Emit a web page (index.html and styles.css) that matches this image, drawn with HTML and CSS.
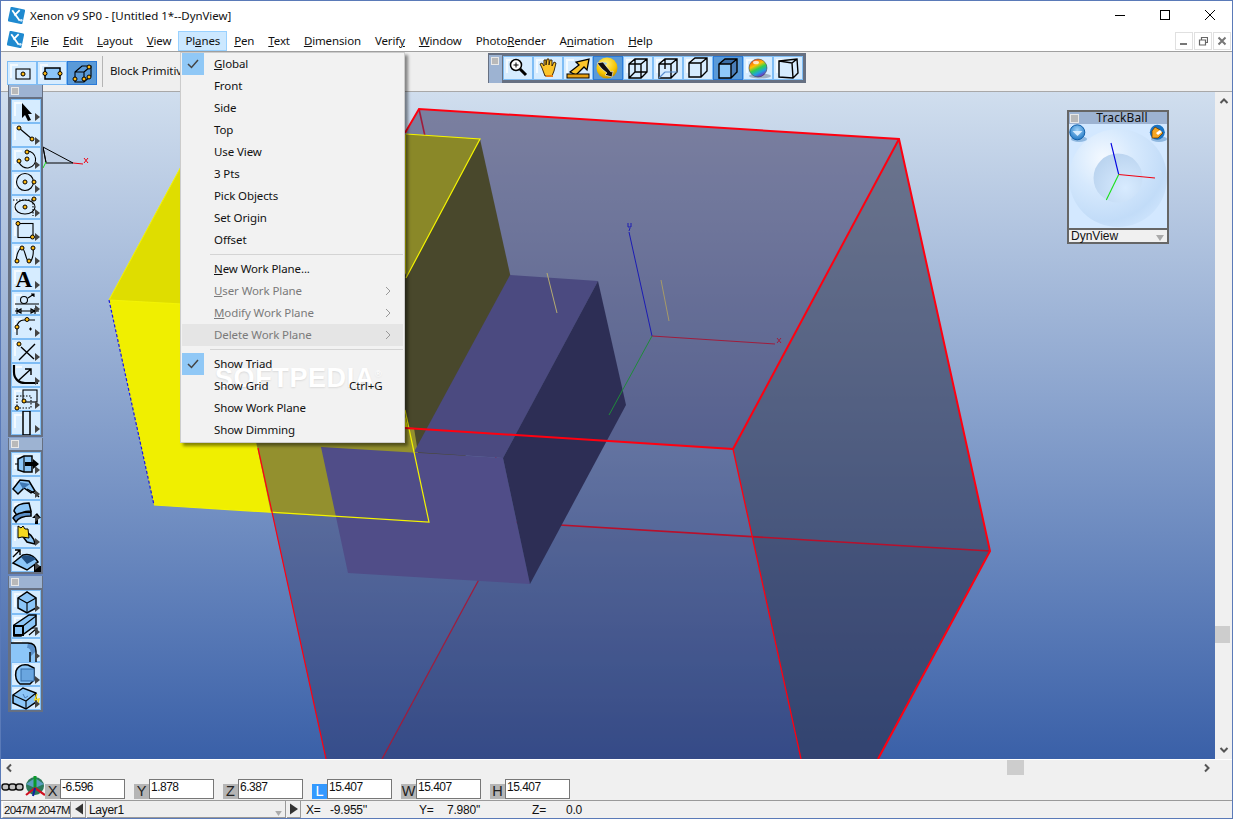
FILE: index.html
```html
<!DOCTYPE html>
<html lang="en">
<head>
<meta charset="utf-8">
<title>Xenon v9 SP0</title>
<link rel="stylesheet" href="styles.css">
</head>
<body>
<div class="app">
  <header class="titlebar">
    <svg class="logo" viewBox="0 0 16 16"><rect x="1" y="1" width="14" height="14" rx="1" transform="rotate(12 8 8)" fill="#1f8ad0"/><path d="M4 3l7 10M11 3L6 8" stroke="#fff" stroke-width="1.700" fill="none"/><circle cx="12.500" cy="12.500" r="1.300" fill="#cfe9fa"/></svg>
    <span class="title-text">Xenon v9 SP0 - [Untitled 1*--DynView]</span>
    <div class="winbtns">
      <span class="winbtn"><svg viewBox="0 0 10 10"><path d="M0 5.500h10" stroke="#000"/></svg></span>
      <span class="winbtn"><svg viewBox="0 0 10 10"><rect x=".5" y=".5" width="9" height="9" fill="none" stroke="#000"/></svg></span>
      <span class="winbtn"><svg viewBox="0 0 10 10"><path d="M0 0l10 10M10 0L0 10" stroke="#000"/></svg></span>
    </div>
  </header>

  <nav class="menubar">
    <svg class="logo menu-logo" viewBox="0 0 16 16"><rect x="1" y="1" width="14" height="14" rx="1" transform="rotate(12 8 8)" fill="#1f8ad0"/><path d="M4 3l7 10M11 3L6 8" stroke="#fff" stroke-width="1.700" fill="none"/><circle cx="12.500" cy="12.500" r="1.300" fill="#cfe9fa"/></svg>
    <span class="mb"><u>F</u>ile</span>
    <span class="mb"><u>E</u>dit</span>
    <span class="mb"><u>L</u>ayout</span>
    <span class="mb"><u>V</u>iew</span>
    <span class="mb mb-open">Pl<u>a</u>nes</span>
    <span class="mb"><u>P</u>en</span>
    <span class="mb"><u>T</u>ext</span>
    <span class="mb"><u>D</u>imension</span>
    <span class="mb">Verif<u>y</u></span>
    <span class="mb"><u>W</u>indow</span>
    <span class="mb">Photo<u>R</u>ender</span>
    <span class="mb">A<u>n</u>imation</span>
    <span class="mb"><u>H</u>elp</span>
    <div class="mdibtns">
      <span class="mdibtn"><svg viewBox="0 0 10 10"><path d="M1 8h7" stroke="#777" stroke-width="2"/></svg></span>
      <span class="mdibtn"><svg viewBox="0 0 10 10"><path d="M1.500 4h6v5h-6zM3.500 4V1.500h6v5H7.500" fill="none" stroke="#666" stroke-width="1.200"/></svg></span>
      <span class="mdibtn"><svg viewBox="0 0 10 10"><path d="M1.500 1.500l7 7M8.500 1.500l-7 7" stroke="#777" stroke-width="2"/></svg></span>
    </div>
  </nav>

  <section class="toolrow">
    <div class="tr-group">
      <span class="tb"><svg viewBox="0 0 30 24"><rect class="ln" x="9" y="8" width="14" height="10" fill="#7dbdf5"/><circle class="nd" cx="16" cy="13" r="2"/></svg></span>
      <span class="tb"><svg viewBox="0 0 30 24"><rect class="bl" x="8" y="7" width="15" height="11"/><circle class="nd" cx="8" cy="12.500" r="2"/><circle class="nd" cx="23" cy="12.500" r="2"/></svg></span>
      <span class="tb tb-on"><svg viewBox="0 0 30 24"><path class="ln" d="M8 11l7-6h9v10l-7 6H8zM8 11h9v10M17 11l7-6"/><circle class="nd" cx="8" cy="18" r="2"/><circle class="nd" cx="17" cy="18" r="2"/><circle class="nd" cx="22" cy="6" r="2"/><circle class="nd" cx="22" cy="16" r="2"/></svg></span>
    </div>
    <span class="tr-sep"></span>
    <span class="tr-label">Block Primitive</span>
  </section>

  <main class="workspace">
    <svg class="scene" viewBox="1 92 1214 667" width="1214" height="667">
      <!-- large translucent cube -->
      <polygon points="419,109 899,139 733,449 251,418" fill="#2f2d5a" fill-opacity=".52"/>
      <polygon points="251,418 733,449 801,759 326,759" fill="#2f2d5a" fill-opacity=".36"/>
      <polygon points="899,139 990,551 878,759 801,759 733,449" fill="#2f3350" fill-opacity=".6"/>
      <polygon points="510,522 990,551 878,759 382,759" fill="#2f2d5a" fill-opacity=".08"/>
      <line x1="419" y1="109" x2="510" y2="522" stroke="#a01c3c" stroke-width="1.600"/>
      <line x1="510" y1="522" x2="990" y2="551" stroke="#b8102c" stroke-width="1.600"/>
      <line x1="510" y1="522" x2="382" y2="759" stroke="#a01c3c" stroke-width="1.300"/>
      <!-- yellow box -->
      <polygon points="109,300 205,122 480,139 383,315" fill="#dfdd00"/>
      <polygon points="109,300 383,315 429,522 154,505" fill="#f0ef00"/>
      <polygon points="480,139 383,315 429,522 526,346" fill="#49482c"/>
      <polygon points="406,134 480,139 406,278" fill="#8a8828"/>
      <polygon points="251,418 414,428 429,522 271,513" fill="#93902e"/>
      <!-- purple box -->
      <polygon points="414,452 510,275 598,281 503,458" fill="#4b4a80"/>
      <polygon points="321,447 503,458 530,584 348,573" fill="#504d88"/>
      <polygon points="598,281 626,405 530,584 503,458" fill="#2d2e55"/>
      <!-- edges -->
      <polyline points="154,505 429,522 405,410" fill="none" stroke="#f4f400" stroke-width="1.200"/>
      <polyline points="406,278 480,139 406,134" fill="none" stroke="#f4f400" stroke-width="1.200"/>
      <line x1="109" y1="300" x2="383" y2="315" stroke="#f4f400" stroke-width="1.200"/>
      <line x1="109" y1="300" x2="205" y2="122" stroke="#f4f400" stroke-width="1"/>
      <line x1="109" y1="300" x2="154" y2="505" stroke="#1a1ae0" stroke-width="1.200" stroke-dasharray="3 2"/>
      <polyline points="258,448 326,759" fill="none" stroke="#ff0010" stroke-width="1.200"/>
      <polyline points="405,133 419,109 899,139 990,551 878,759" fill="none" stroke="#ff0010" stroke-width="2"/>
      <polyline points="899,139 733,449" fill="none" stroke="#ff0010" stroke-width="2"/>
      <line x1="733" y1="449" x2="801" y2="759" stroke="#ff0010" stroke-width="1.300"/>
      <line x1="405" y1="428" x2="733" y2="449" stroke="#ff0010" stroke-width="2"/>
      <!-- triad -->
      <line x1="652" y1="336" x2="629" y2="232" stroke="#1c1cb4" stroke-width="1"/>
      <line x1="652" y1="336" x2="775" y2="344" stroke="#a01c3c" stroke-width="1"/>
      <line x1="652" y1="336" x2="609" y2="415" stroke="#1f8a3a" stroke-width="1"/>
      <line x1="547" y1="273" x2="557" y2="313" stroke="#b5ac72" stroke-width="1"/>
      <line x1="661" y1="280" x2="669" y2="321" stroke="#a69a68" stroke-width="1"/>
      <path d="M628 223v4h3v-4M630 228l-1 3" fill="none" stroke="#1c1cb4"/>
      <path d="M777 338l4 5M781 338l-4 5" fill="none" stroke="#a01c3c"/>
      <!-- small corner triad -->
      <path d="M43 147l30 16H46zM43 147l3 15" fill="none" stroke="#000"/>
      <line x1="73" y1="163" x2="83" y2="164" stroke="#f00010"/>
      <line x1="46" y1="162" x2="43" y2="168" stroke="#19e019"/>
      <path d="M84 158l4 5M88 158l-4 5" fill="none" stroke="#f00010"/>
    </svg>
    <div class="vscroll">
      <svg class="chev" viewBox="0 0 10 8"><path d="M1.500 6L5 2.500 8.500 6" fill="none" stroke="#555" stroke-width="2"/></svg>
      <span class="vthumb"></span>
      <svg class="chev" viewBox="0 0 10 8"><path d="M1.500 2L5 5.500 8.500 2" fill="none" stroke="#555" stroke-width="2"/></svg>
    </div>
  </main>

  <div class="hscroll">
    <svg class="chev" viewBox="0 0 8 10"><path d="M6 1.500L2.500 5 6 8.500" fill="none" stroke="#555" stroke-width="2"/></svg>
    <span class="hthumb"></span>
    <svg class="chev" viewBox="0 0 8 10"><path d="M2 1.500L5.500 5 2 8.500" fill="none" stroke="#555" stroke-width="2"/></svg>
  </div>

  <div class="coords">
    <svg class="coord-icon" viewBox="0 0 44 24">
      <g fill="#c4c4c4" stroke="#111" stroke-width="1.400"><rect x="1" y="8" width="7" height="6" rx="2.500"/><rect x="8" y="8" width="7" height="6" rx="2.500"/><rect x="15" y="8" width="7" height="6" rx="2.500"/></g>
      <circle cx="34" cy="10" r="9" fill="#2b7a5a"/>
      <path d="M25 8l9-6 9 6-9 4z" fill="#5a9fc0"/>
      <path d="M34 0v12" stroke="#0b9a2a" stroke-width="3"/>
      <path d="M34 12L25 19M34 12l10 7" stroke="#d01020" stroke-width="2.200"/>
      <path d="M34 12l-2 8" stroke="#1020a0" stroke-width="2"/>
    </svg>
    <span class="cf"><span class="cl">X</span><span class="ci">-6.596</span></span>
    <span class="cf"><span class="cl">Y</span><span class="ci">1.878</span></span>
    <span class="cf"><span class="cl">Z</span><span class="ci">6.387</span></span>
    <span class="cf"><span class="cl cl-on">L</span><span class="ci">15.407</span></span>
    <span class="cf"><span class="cl">W</span><span class="ci">15.407</span></span>
    <span class="cf"><span class="cl">H</span><span class="ci">15.407</span></span>
  </div>

  <footer class="status">
    <span class="st-mem">2047M 2047M</span>
    <span class="st-arrow"><svg viewBox="0 0 10 12"><path d="M1 6l8-5.500v11z" fill="#333"/></svg></span>
    <span class="st-layer">Layer1<svg class="st-drop" viewBox="0 0 8 6"><path d="M0 0h8L4 6z" fill="#aaa"/></svg></span>
    <span class="st-arrow"><svg viewBox="0 0 10 12"><path d="M9 6L1 .5v11z" fill="#333"/></svg></span>
    <span class="st-pos st-x">X=</span><span class="st-pos st-xv">-9.955''</span>
    <span class="st-pos st-y">Y=</span><span class="st-pos st-yv">7.980''</span>
    <span class="st-pos st-z">Z=</span><span class="st-pos st-zv">0.0</span>
  </footer>

  <!-- floating view toolbar -->
  <div class="float viewbar">
    <span class="grip grip-v"><i></i></span>
    <span class="tb"><svg viewBox="0 0 30 24"><circle cx="13" cy="9" r="5.500" fill="#fff" stroke="#000" stroke-width="1.500"/><path d="M13 6.500v5M10.500 9h5" stroke="#000"/><path d="M17 13l6 6" stroke="#000" stroke-width="3"/></svg></span>
    <span class="tb"><svg viewBox="0 0 30 24"><path d="M9 12l-2-4 2-1 2 3V4h2v5l1-6h2v6l1-5h2v6l2-4 2 1-2 8-2 5H12z" fill="#fbc42a" stroke="#2a1a00" stroke-width=".9"/><path d="M13 20h7" stroke="#e8801a" stroke-width="2"/></svg></span>
    <span class="tb"><svg viewBox="0 0 30 24"><path d="M7 16l9-7-3-3 13-3-2 11-3-3-8 8z" fill="#fbc42a" stroke="#000" stroke-width="1.300"/><rect x="4" y="18" width="22" height="4" fill="#e8a010" stroke="#000"/></svg></span>
    <span class="tb tb-on"><svg viewBox="0 0 30 24"><defs><radialGradient id="gold" cx=".45" cy=".3" r=".8"><stop offset="0" stop-color="#fff27a"/><stop offset=".6" stop-color="#f5c400"/><stop offset="1" stop-color="#a87800"/></radialGradient></defs><circle cx="14" cy="12" r="10.500" fill="url(#gold)"/><path d="M4 7l6-1 3 4 5 6 2-1-1 6-7-2 2-2-5-4z" fill="#111" stroke="#fff" stroke-width=".6"/><path d="M10 6l4 1-1 2z" fill="#8fc8fa"/></svg></span>
    <span class="tb"><svg viewBox="0 0 30 24"><path class="ln ln-b" d="M6 8l6-5h12v13l-6 6H6zM6 8h12v14M18 8l6-5M12 3v13h12M12 16l-6 6"/></svg></span>
    <span class="tb"><svg viewBox="0 0 30 24"><path class="ln ln-b" d="M6 8l6-5h12v13l-6 6H6zM6 8h12v14M18 8l6-5M12 3v10"/><path d="M12 16l-6 6M12 16h12" stroke="#5a8fd0" stroke-width="1.200"/></svg></span>
    <span class="tb"><svg viewBox="0 0 30 24"><path class="ln ln-b" d="M6 7l6-5h12v13l-6 6H6zM6 7h12v14M18 7l6-5"/></svg></span>
    <span class="tb tb-on"><svg viewBox="0 0 30 24"><path d="M6 8l6-5h12l-6 5z" fill="#3b6ea8"/><path d="M18 8l6-5v13l-6 6z" fill="#4a7db8"/><path d="M6 8h12v14H6z" fill="#8fc8fa"/><path class="ln ln-b" d="M6 8l6-5h12v13l-6 6H6zM6 8h12v14M18 8l6-5"/></svg></span>
    <span class="tb"><svg viewBox="0 0 30 24"><defs><linearGradient id="rb" x1=".2" y1="0" x2=".7" y2="1"><stop offset="0" stop-color="#ff3a1a"/><stop offset=".35" stop-color="#ffc000"/><stop offset=".55" stop-color="#30d050"/><stop offset=".75" stop-color="#20a0e0"/><stop offset="1" stop-color="#8020c0"/></linearGradient></defs><ellipse cx="17" cy="20" rx="11" ry="2.500" fill="#9db0c4"/><circle cx="15" cy="12" r="9" fill="url(#rb)" stroke="#333" stroke-width=".5"/><ellipse cx="13" cy="6.500" rx="3" ry="1.800" fill="#fff" opacity=".75"/></svg></span>
    <span class="tb"><svg viewBox="0 0 30 24"><path class="ln ln-b" d="M6 5l18-2 1 14-5 5-14-1zM24 3l-5 4-13-2M19 7l1 15"/></svg></span>
  </div>

  <!-- floating drawing toolbars -->
  <div class="float sidebar bar-a">
    <span class="grip"><i></i></span>
    <span class="tb more"><svg viewBox="0 0 30 24"><path d="M11 4v15l3-3 3 6 3-1-3-6h4z" fill="#000"/></svg></span>
    <span class="tb more"><svg viewBox="0 0 30 24"><path class="ln" d="M8 5l13 11"/><circle class="nd" cx="8" cy="5" r="2"/><circle class="nd" cx="21" cy="16" r="2"/></svg></span>
    <span class="tb more"><svg viewBox="0 0 30 24"><path class="ln" d="M16 4a8.500 8.500 0 1 1-8 11"/><circle class="nd" cx="16" cy="5" r="2"/><circle class="nd" cx="8" cy="14" r="2"/><circle class="nd" cx="16" cy="12" r="2"/></svg></span>
    <span class="tb more"><svg viewBox="0 0 30 24"><circle class="ln" cx="14" cy="11" r="8.500"/><circle class="nd" cx="14" cy="11" r="2"/><circle class="nd" cx="23" cy="11" r="2"/></svg></span>
    <span class="tb more"><svg viewBox="0 0 30 24"><ellipse class="ln" cx="14" cy="12" rx="10" ry="7"/><path class="ln ln-d" d="M2 5h20M22 5v16"/><circle class="nd" cx="14" cy="12" r="2"/><circle class="nd" cx="23" cy="4" r="2"/></svg></span>
    <span class="tb more"><svg viewBox="0 0 30 24"><rect class="ln" x="7" y="4.500" width="15" height="14"/><circle class="nd" cx="7" cy="4.500" r="2"/><circle class="nd" cx="21.500" cy="18" r="2"/></svg></span>
    <span class="tb more"><svg viewBox="0 0 30 24"><path class="ln" d="M5 20C5 12 8 5 11 5s4 14 7 14 5-8 4-14"/><circle class="nd" cx="11" cy="5" r="2"/><circle class="nd" cx="22" cy="5" r="2"/><circle class="nd" cx="6" cy="18" r="2"/><circle class="nd" cx="18" cy="18" r="2"/></svg></span>
    <span class="tb more"><svg viewBox="0 0 30 24"><text class="ic-a" x="4.500" y="20">A</text></svg></span>
    <span class="tb more"><svg viewBox="0 0 30 24"><circle class="ln" cx="13" cy="9" r="3.500"/><path class="ln" d="M17 7l6-4M20 3h3v3"/><path class="ln" d="M4 13h24M4 20h24M6 17v6M24 17v6M6 20l4-2v4zM24 20l-4-2v4z"/></svg></span>
    <span class="tb more"><svg viewBox="0 0 30 24"><path class="ln" d="M6 20v-8c0-4 3-7 7-7h11"/><path class="ln" d="M18 14h3M19.500 12.500v3"/><circle class="nd" cx="16" cy="4.500" r="2"/><circle class="nd" cx="6" cy="12" r="2"/></svg></span>
    <span class="tb more"><svg viewBox="0 0 30 24"><path class="ln ln-b" d="M10 8l13 12M8 21l16-16"/><circle class="nd" cx="8" cy="5" r="2"/></svg></span>
    <span class="tb more"><svg viewBox="0 0 30 24"><path d="M3 2v7c0 7 5 11 11 11h13" fill="none" stroke="#000" stroke-width="2.200"/><path class="ln ln-b" d="M8 17l12-11M14 6h6v6"/></svg></span>
    <span class="tb more"><svg viewBox="0 0 30 24"><rect class="ln ln-d" x="6" y="9" width="14" height="12"/><rect class="ln" x="12" y="3" width="14" height="12"/><circle class="nd" cx="13" cy="14" r="2"/><circle class="nd" cx="6" cy="21" r="2"/></svg></span>
    <span class="tb more"><svg viewBox="0 0 30 24"><rect x="12" y="0" width="7" height="24" fill="none" stroke="#000" stroke-width="1.500"/></svg></span>
  </div>

  <div class="float sidebar bar-b">
    <span class="grip"><i></i></span>
    <span class="tb more"><svg viewBox="0 0 30 24"><path class="bl" d="M7 7l6-3h8v16H13l-6-2z"/><path d="M7 12H4M13 4v16" class="ln"/><path d="M14 10h8V7l6 5-6 5v-3h-8z" fill="#000"/></svg></span>
    <span class="tb more"><svg viewBox="0 0 30 24"><path class="bl" d="M2 13l7-9 9 1 6 10-4 2-7-5-6 6z"/><path d="M8 6l4 7 7-5z" fill="#3f78b4"/><path d="M16 13l9 5 3 3" class="ln ln-b"/></svg></span>
    <span class="tb more"><svg viewBox="0 0 30 24"><path class="bl" d="M3 11C4 6 9 3 18 3l2 8c-7 0-12 2-13 6z"/><path class="bl bl-d" d="M2 18c2-4 8-6 18-6v4c-7 0-13 2-15 6z"/><path d="M24 24v-6h-3l5-5 4 5h-3v6z" fill="#000"/></svg></span>
    <span class="tb more"><svg viewBox="0 0 30 24"><path class="bl" d="M12 8c6 0 11 5 12 12l-8-2-6-8z"/><path d="M7 2l3 2 2-2 2 3 3 0 1 9-7-1-4 1z" fill="#f5d820" stroke="#000"/></svg></span>
    <span class="tb more"><svg viewBox="0 0 30 24"><path class="bl" d="M2 15l10-8c7-2 12 2 15 7l-11 8z"/><path d="M10 9l6 7 9-5c-4-3-10-5-15-2z" fill="#214e80"/><path class="ln ln-b" d="M2 9l7-7M4 2h5v5"/><path d="M23 24V16l2 2h5v6z" fill="#000"/></svg></span>
  </div>

  <div class="float sidebar bar-c">
    <span class="grip"><i></i></span>
    <span class="tb more"><svg viewBox="0 0 30 24"><path class="bl" d="M7 8l9-6 9 6v10l-9 5-9-5z"/><path class="ln" d="M7 8l9 5 9-5M16 13v10"/></svg></span>
    <span class="tb more"><svg viewBox="0 0 30 24"><path class="bl" d="M3 11L18 1h7v10L10 22H3z"/><rect x="3" y="12" width="9" height="9" fill="#8cc6f8" stroke="#000" stroke-width="2"/><path class="ln" d="M12 12L25 2"/><path class="ln" d="M18 21l7-6M21 14h5v5"/></svg></span>
    <span class="tb more"><svg viewBox="0 0 30 24"><path d="M0 5h17c5 0 8 3 8 8v11H0z" fill="#8cc6f8"/><path d="M17 5c5 0 8 3 8 8l-5 5c0-6-1-8-4-8z" fill="#5a8fc8"/><path class="ln ln-b" d="M0 5h17c5 0 8 3 8 8v11M19 14v10"/></svg></span>
    <span class="tb more"><svg viewBox="0 0 30 24"><path class="bl" d="M5 9c2-5 6-7 12-6l6 3v12l-4 4H9c-4-3-5-8-4-13z"/><rect x="10" y="7" width="13" height="12" fill="#6aa6e0" stroke="#346ca8"/></svg></span>
    <span class="tb more"><svg viewBox="0 0 30 24"><path class="bl" d="M2 9l10-7 13 5v9l-10 7-13-6z"/><path class="ln" d="M2 9l13 6 10-8M15 15v8"/><path d="M12 8l2 4 3-2" fill="none" stroke="#4a7db8"/><path d="M26 8l-2 6 4-1-2 7" fill="none" stroke="#f5d820" stroke-width="1.500"/></svg></span>
  </div>

  <!-- trackball -->
  <div class="float trackball">
    <div class="tk-head"><i></i><span>TrackBall</span></div>
    <div class="tk-body">
      <svg viewBox="0 0 98 104" width="98" height="104">
        <defs>
          <radialGradient id="ball" cx=".35" cy=".3" r=".8"><stop offset="0" stop-color="#f4f9ff"/><stop offset=".4" stop-color="#d6e9fd"/><stop offset=".8" stop-color="#c2dcf8"/><stop offset="1" stop-color="#cfe5fd"/></radialGradient>
          <radialGradient id="dent" cx=".65" cy=".7" r=".8"><stop offset="0" stop-color="#d8ebff"/><stop offset="1" stop-color="#b8d2ee"/></radialGradient>
          <radialGradient id="bt" cx=".5" cy=".35" r=".7"><stop offset="0" stop-color="#9fd2f8"/><stop offset="1" stop-color="#1a73c2"/></radialGradient>
        </defs>
        <circle cx="49" cy="54" r="49" fill="url(#ball)"/>
        <circle cx="49" cy="54" r="24.500" fill="url(#dent)"/>
        <path d="M49.700 50.500L42 19" stroke="#0000e0" stroke-width="1.100"/>
        <path d="M49.700 50.500L86 54" stroke="#f00010" stroke-width="1.100"/>
        <path d="M49.700 50.500L37.300 76" stroke="#19e019" stroke-width="1.100"/>
        <ellipse cx="10" cy="15" rx="8" ry="3" fill="#8fb8e0"/>
        <circle cx="8.300" cy="8.300" r="7.500" fill="url(#bt)" stroke="#0f5ea8"/>
        <path d="M3.500 7h10l-5 5z" fill="#d6ecff"/>
        <ellipse cx="90" cy="15" rx="8" ry="3" fill="#8fb8e0"/>
        <circle cx="88.300" cy="8.300" r="7.500" fill="#1a73c2"/>
        <path d="M83 7l3-4 5 3 3 3-5 5h-6z" fill="#f5a623" stroke="#5a3000" stroke-width=".7"/>
        <path d="M87 9l4-3 2 2-4 3z" fill="#fff"/>
      </svg>
    </div>
    <div class="tk-combo">DynView<svg viewBox="0 0 8 6"><path d="M0 0h8L4 6z" fill="#aaa"/></svg></div>
  </div>

  <!-- open Planes menu -->
  <div class="popup">
    <span class="watermark">SOFTPEDIA<sup>®</sup></span>
    <div class="mi"><span class="mk on"><svg viewBox="0 0 12 10"><path d="M1 5l3.500 3.500L11 1" fill="none" stroke="#444" stroke-width="1.500"/></svg></span><span><u>G</u>lobal</span></div>
    <div class="mi"><span class="mk"></span><span>Front</span></div>
    <div class="mi"><span class="mk"></span><span>Side</span></div>
    <div class="mi"><span class="mk"></span><span>Top</span></div>
    <div class="mi"><span class="mk"></span><span>Use View</span></div>
    <div class="mi"><span class="mk"></span><span>3 Pts</span></div>
    <div class="mi"><span class="mk"></span><span>Pick Objects</span></div>
    <div class="mi"><span class="mk"></span><span>Set Origin</span></div>
    <div class="mi"><span class="mk"></span><span>Offset</span></div>
    <div class="msep"></div>
    <div class="mi"><span class="mk"></span><span><u>N</u>ew Work Plane...</span></div>
    <div class="mi dis"><span class="mk"></span><span><u>U</u>ser Work Plane</span><svg class="sub" viewBox="0 0 6 10"><path d="M1 1l4 4-4 4" fill="none" stroke="#999"/></svg></div>
    <div class="mi dis"><span class="mk"></span><span><u>M</u>odify Work Plane</span><svg class="sub" viewBox="0 0 6 10"><path d="M1 1l4 4-4 4" fill="none" stroke="#999"/></svg></div>
    <div class="mi dis hl"><span class="mk"></span><span>Delete Work Plane</span><svg class="sub" viewBox="0 0 6 10"><path d="M1 1l4 4-4 4" fill="none" stroke="#999"/></svg></div>
    <div class="msep"></div>
    <div class="mi"><span class="mk on"><svg viewBox="0 0 12 10"><path d="M1 5l3.500 3.500L11 1" fill="none" stroke="#444" stroke-width="1.500"/></svg></span><span>Show Triad</span></div>
    <div class="mi"><span class="mk"></span><span>Show Grid</span><span class="acc">Ctrl+G</span></div>
    <div class="mi"><span class="mk"></span><span>Show Work Plane</span></div>
    <div class="mi"><span class="mk"></span><span>Show Dimming</span></div>
  </div>
</div>
</body>
</html>
```
FILE: styles.css
```css
* { box-sizing: border-box; }
html, body { margin: 0; padding: 0; }
body { width: 1233px; height: 819px; overflow: hidden; font-family: "Noto Sans", sans-serif; font-size: 11.5px; letter-spacing: -.1px; color: #111; background: #f0f0f0; }
.app { position: relative; width: 1233px; height: 819px; border: 1px solid #5a7ab8; display: flex; flex-direction: column; background: #f0f0f0; overflow: hidden; }

/* title bar */
.titlebar { height: 28px; flex: none; background: #fff; display: flex; align-items: center; padding-left: 7px; }
.logo { width: 17px; height: 17px; flex: none; }
.title-text { margin-left: 5px; letter-spacing: -.05px; }
.winbtns { margin-left: auto; display: flex; }
.winbtn { width: 45px; height: 28px; display: flex; align-items: center; justify-content: center; }
.winbtn svg { width: 10px; height: 10px; }

/* menu bar */
.menubar { height: 23px; flex: none; background: #fff; border-bottom: 1px solid #a0a0a0; display: flex; align-items: flex-start; padding-left: 5px; padding-right: 1px; }
.menu-logo { margin: 2px 0 0 1px; }
.mb { height: 20px; margin-top: 2px; padding: 0 7px; line-height: 19px; white-space: nowrap; letter-spacing: -.13px; }
.mb-open { background: #cce8ff; box-shadow: inset 0 0 0 1px #99d1ff; }
.mdibtns { margin-left: auto; display: flex; gap: 1px; margin-top: 3px; }
.mdibtn { width: 18px; height: 18px; border: 1px solid #e0e0e0; display: flex; align-items: center; justify-content: center; }
.mdibtn svg { width: 10px; height: 10px; }

/* toolbar row */
.toolrow { height: 40px; flex: none; border-bottom: 1px solid #a8a8a8; background: #efefef; display: flex; align-items: flex-start; padding-left: 6px; }
.tr-group { display: flex; margin-top: 9px; }
.tr-sep { width: 1px; height: 31px; margin: 4px 0 0 5px; background: #b5b5b5; }
.tr-label { margin: 11px 0 0 7px; white-space: nowrap; }

/* tool buttons */
.tb { position: relative; display: block; flex: none; width: 30px; height: 24px; background: #d6ecff; box-shadow: inset 0 0 0 1px #7fbdf5; }
.tb::before { content: ""; position: absolute; left: 3px; top: 3px; width: 6px; height: 12px; border: solid #f3faff; border-width: 2px 0 0 2px; }
.tb svg { position: relative; display: block; width: 30px; height: 24px; }
.tb.more::after { content: ""; position: absolute; right: 1px; bottom: 2px; border-style: solid; border-width: 4px 0 4px 5px; border-color: transparent transparent transparent #444; }
.tb-on { background: #5a9ad8; box-shadow: inset 0 0 0 1px #2a7ad8; }
.tb-on::before { display: none; }
.ln { fill: none; stroke: #000; stroke-width: 1.1; }
.ln-b { stroke-width: 1.4; }
.ln-d { stroke-dasharray: 1.5 1.5; }
.nd { fill: #fdb913; stroke: #000; stroke-width: 1; }
.bl { fill: #8cc6f8; stroke: #000; stroke-width: 1.5; }
.bl-d { fill: #5a8fc8; }
.ic-a { font-family: "Liberation Serif", serif; font-size: 23px; font-weight: 700; fill: #000; }

/* workspace */
.workspace { height: 667px; flex: none; display: flex; background: linear-gradient(#d0deee, #3a60a8); }
.scene { flex: none; display: block; }
.vscroll { flex: none; width: 17px; background: #f0f0f0; position: relative; display: flex; flex-direction: column; justify-content: space-between; align-items: center; padding: 5px 0; }
.vscroll .chev { width: 10px; height: 8px; }
.vthumb { position: absolute; left: 0; top: 534px; width: 15px; height: 17px; background: #cdcdcd; }
.hscroll { height: 17px; flex: none; border-top: 1px solid #fff; background: #f0f0f0; position: relative; display: flex; justify-content: space-between; align-items: center; padding: 0 21px 1px 4px; }
.hscroll .chev { width: 8px; height: 10px; }
.hthumb { position: absolute; left: 1006px; top: 0; width: 17px; height: 15px; background: #cdcdcd; }

/* coordinates */
.coords { height: 24px; flex: none; display: flex; align-items: center; gap: 9px; font-family: "Liberation Sans", sans-serif; letter-spacing: 0; }
.coord-icon { width: 44px; height: 24px; flex: none; margin-right: -9px; }
.cf { display: flex; height: 20px; margin-top: 1px; }
.cl { width: 15px; background: #b5b5b5; margin-top: 5px; height: 15px; line-height: 15px; text-align: center; font-size: 14.5px; color: #222; }
.cl-on { background: #3399ff; color: #fff; }
.ci { width: 65px; height: 20px; background: #fff; border: 1px solid #777; font-size: 12px; line-height: 14px; padding-left: 1px; color: #111; letter-spacing: -.5px; }

/* status */
.status { height: 18px; flex: none; border-top: 1px solid #9a9a9a; display: flex; align-items: stretch; position: relative; font-family: "Liberation Sans", sans-serif; font-size: 12px; letter-spacing: 0; padding-left: 1px; gap: 1px; }
.st-mem { width: 69px; height: 17px; border: 1px solid #aaa; border-color: #fff #999 #999 #fff; line-height: 17px; font-size: 11.5px; letter-spacing: -.7px; white-space: nowrap; overflow: hidden; padding-left: 1px; background: #eee; }
.st-arrow { width: 14px; height: 17px; display: flex; align-items: center; justify-content: center; border: solid #999; border-width: 0 1px 1px 0; background: #eee; }
.st-arrow svg { width: 10px; height: 12px; }
.st-layer { width: 199px; height: 17px; position: relative; padding-left: 2px; line-height: 18px; border: solid #999; border-width: 0 1px 1px 0; background: #eee; letter-spacing: -.3px; }
.st-drop { position: absolute; right: 3px; bottom: 1px; width: 7px; height: 5px; }
.st-pos { position: absolute; top: 1px; line-height: 17px; font-size: 12px; letter-spacing: -.2px; }
.st-x { left: 305px; } .st-xv { left: 329px; }
.st-y { left: 418px; } .st-yv { left: 446px; }
.st-z { left: 531px; } .st-zv { left: 565px; }

/* floating */
.float { position: absolute; z-index: 2; }
.grip { display: block; background: #9db3d2; position: relative; }
.grip i { position: absolute; display: block; left: 2px; top: 2px; width: 8px; height: 8px; background: #b9b9b9; border: 1px solid #e8e8e8; }
.viewbar { left: 487px; top: 52px; width: 318px; height: 30px; background: #667082; padding: 2px 3px 2px 1px; display: flex; }
.viewbar .tb { width: 30px; margin-top: 1px; }
.grip-v { width: 13px; height: 28px; margin-right: 1px; }
.sidebar { left: 7px; width: 35px; background: #667082; padding: 0 1px 2px; display: flex; flex-direction: column; align-items: center; }
.sidebar .grip { width: 33px; height: 12px; margin-bottom: 2px; }
.sidebar .tb { width: 30px; }
.bar-a { top: 84px; }
.bar-b { top: 437px; }
.bar-c { top: 575px; }

/* trackball */
.trackball { left: 1066px; top: 109px; width: 102px; height: 134px; border: 2px solid #666; background: #d3e8ff; display: flex; flex-direction: column; }
.tk-head { height: 12px; flex: none; background: #9db3d2; position: relative; text-align: center; font-size: 12px; letter-spacing: .1px; line-height: 12px; color: #111; padding-left: 8px; }
.tk-head i { position: absolute; left: 1px; top: 2px; width: 9px; height: 9px; background: #b9b9b9; border: 1px solid #e8e8e8; }
.tk-body { flex: 1; position: relative; overflow: hidden; }
.tk-body svg { display: block; }
.tk-combo { height: 14px; flex: none; border-top: 2px solid #666; background: #f0f0f0; font-size: 12px; line-height: 12px; padding-left: 2px; position: relative; font-family: "Liberation Sans", sans-serif; letter-spacing: 0; }
.tk-combo svg { position: absolute; right: 3px; bottom: 1px; width: 8px; height: 6px; }

/* popup menu */
.popup { position: absolute; z-index: 5; left: 179px; top: 51px; width: 225px; height: 391px; background: #f2f2f2; border: 1px solid #ccc; padding: 0 1px; box-shadow: 3px 3px 3px rgba(0,0,0,.45); }
.mi { height: 22px; display: flex; align-items: flex-start; line-height: 21px; white-space: nowrap; color: #111; position: relative; z-index: 1; }
.mk { width: 22px; height: 22px; flex: none; margin-right: 10px; display: flex; align-items: center; justify-content: center; }
.mk.on { background: #90c8f6; }
.mk svg { width: 12px; height: 10px; }
.dis { color: #7a7a7a; }
.hl { background: #e5e5e5; }
.sub { position: absolute; right: 12px; top: 6px; width: 6px; height: 10px; }
.acc { position: absolute; left: 167px; top: 0; }
.msep { height: 7px; margin-left: 28px; position: relative; }
.msep::after { content: ""; position: absolute; left: 0; right: 0; top: 3px; height: 1px; background: #d4d4d4; }
.watermark { position: absolute; left: 34px; top: 310px; font-size: 27px; font-weight: 700; color: #fff; letter-spacing: .6px; text-shadow: 0 1px 2px rgba(0,0,0,.1); font-family: "Liberation Sans", sans-serif; white-space: nowrap; }
.watermark sup { font-size: 9px; font-weight: 400; }
```
